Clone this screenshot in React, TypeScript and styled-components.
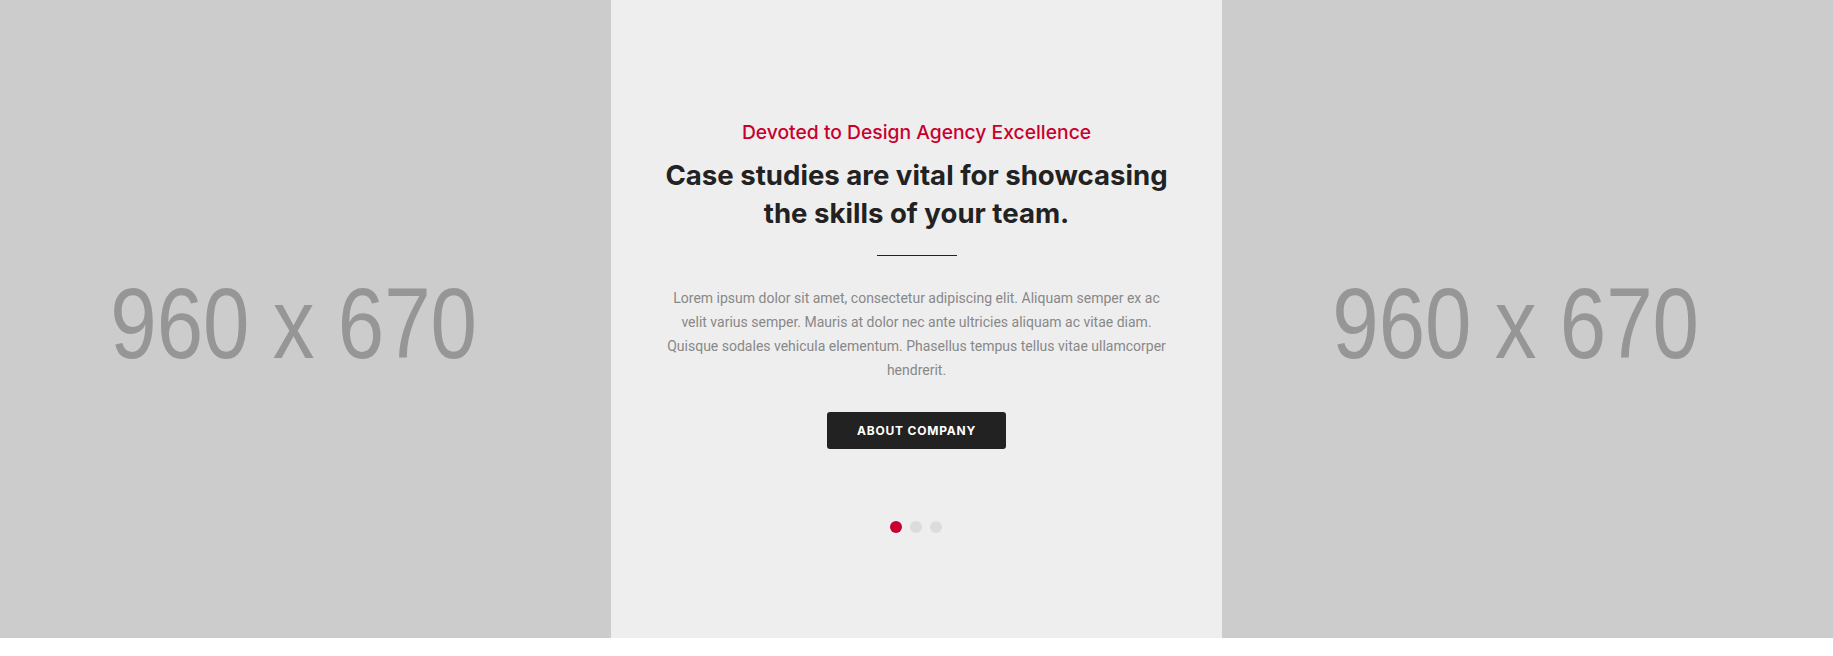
import React from "react";
import styled, { createGlobalStyle } from "styled-components";

const GlobalStyle = createGlobalStyle`
  html, body { margin: 0; padding: 0; background: #ffffff; }
  * { box-sizing: border-box; }
`;

const Section = styled.section`
  display: grid;
  grid-template-columns: repeat(3, 1fr);
  height: 638px;
  width: 1833px;
`;

const PlaceholderPanel = styled.div`
  background: #cccccc;
  display: flex;
  align-items: center;
  justify-content: center;
  overflow: hidden;
`;

const PlaceholderText = styled.span`
  font-family: "Liberation Sans", Arial, sans-serif;
  font-size: 100px;
  line-height: 1;
  color: #969696;
  white-space: nowrap;
  transform: translate(-12px, 4px) scaleX(0.835);
`;

const ContentPanel = styled.div`
  background: #eeeeee;
  display: flex;
  flex-direction: column;
  align-items: center;
  padding-top: 119px;
  text-align: center;
`;

const Inner = styled.div`
  width: 505px;
  display: flex;
  flex-direction: column;
  align-items: center;
`;

const Eyebrow = styled.h4`
  margin: 0;
  font-family: Inter, "Noto Sans", sans-serif;
  font-weight: 500;
  font-size: 19.3px;
  line-height: 26px;
  color: #c9002f;
`;

const Heading = styled.h2`
  margin: 11px 0 0;
  font-family: Inter, "Noto Sans", sans-serif;
  font-weight: 700;
  font-size: 27.6px;
  line-height: 38px;
  color: #222222;
`;

const Divider = styled.span`
  display: block;
  width: 80px;
  height: 1px;
  background: #222222;
  margin-top: 23px;
`;

const Body = styled.p`
  margin: 30px 0 0;
  font-family: Roboto, "Noto Sans", sans-serif;
  font-size: 14px;
  line-height: 24px;
  color: #888888;
`;

const Button = styled.a`
  margin-top: 30px;
  display: inline-flex;
  align-items: center;
  justify-content: center;
  width: 179px;
  height: 37px;
  border-radius: 3px;
  background: #222222;
  color: #ffffff;
  font-family: Inter, "Noto Sans", sans-serif;
  font-weight: 700;
  font-size: 12px;
  letter-spacing: 0.8px;
  text-decoration: none;
  text-transform: uppercase;
`;

const Dots = styled.div`
  display: flex;
  gap: 8px;
  margin-top: 72px;
  transform: translateX(-1px);
`;

const Dot = styled.span<{ $active?: boolean }>`
  width: 12px;
  height: 12px;
  border-radius: 50%;
  background: ${(p) => (p.$active ? "#c9002f" : "#dcdcdc")};
`;

export default function App() {
  return (
    <>
      <GlobalStyle />
      <Section>
        <PlaceholderPanel>
          <PlaceholderText>960 x 670</PlaceholderText>
        </PlaceholderPanel>
        <ContentPanel>
          <Inner>
            <Eyebrow>Devoted to Design Agency Excellence</Eyebrow>
            <Heading>Case studies are vital for showcasing the skills of your team.</Heading>
            <Divider />
            <Body>
              Lorem ipsum dolor sit amet, consectetur adipiscing elit. Aliquam semper ex ac velit
              varius semper. Mauris at dolor nec ante ultricies aliquam ac vitae diam. Quisque
              sodales vehicula elementum. Phasellus tempus tellus vitae ullamcorper hendrerit.
            </Body>
            <Button href="#">About Company</Button>
            <Dots>
              <Dot $active />
              <Dot />
              <Dot />
            </Dots>
          </Inner>
        </ContentPanel>
        <PlaceholderPanel>
          <PlaceholderText>960 x 670</PlaceholderText>
        </PlaceholderPanel>
      </Section>
    </>
  );
}
